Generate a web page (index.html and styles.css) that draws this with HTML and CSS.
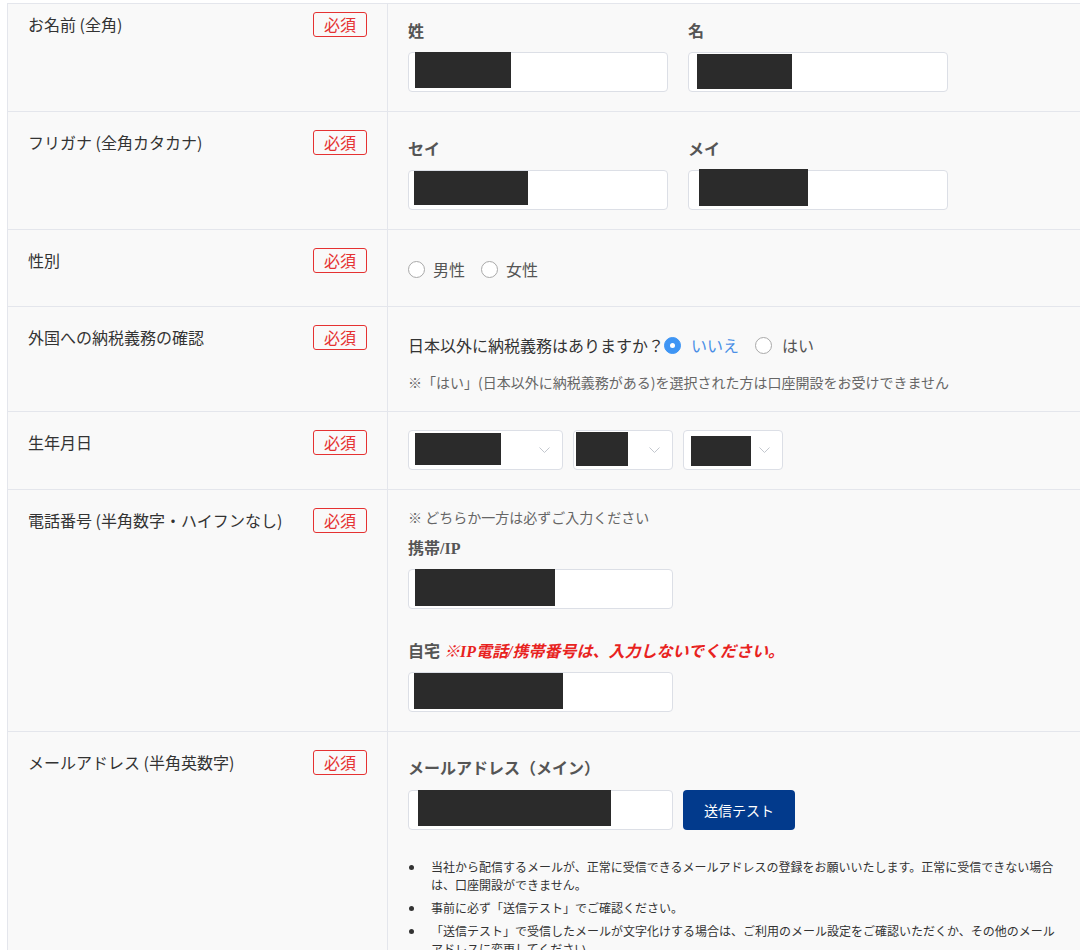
FILE: index.html
```html
<!DOCTYPE html>
<html lang="ja">
<head>
  <meta charset="UTF-8">
  <title>口座開設 お客様情報</title>
  <link rel="stylesheet" href="styles.css">
</head>
<body>
  <div class="form">
    <div class="row row-first">
      <div class="head"><span class="head-label">お名前 (全角)</span><span class="req">必須</span></div>
      <div class="body">
        <div class="pair">
          <div class="field">
            <div class="field-label">姓</div>
            <div class="input"><span class="mask mask-sei"></span></div>
          </div>
          <div class="field">
            <div class="field-label">名</div>
            <div class="input"><span class="mask mask-mei"></span></div>
          </div>
        </div>
      </div>
    </div>

    <div class="row">
      <div class="head"><span class="head-label">フリガナ (全角カタカナ)</span><span class="req">必須</span></div>
      <div class="body">
        <div class="pair">
          <div class="field">
            <div class="field-label">セイ</div>
            <div class="input"><span class="mask mask-kana-sei"></span></div>
          </div>
          <div class="field">
            <div class="field-label">メイ</div>
            <div class="input"><span class="mask mask-kana-mei"></span></div>
          </div>
        </div>
      </div>
    </div>

    <div class="row">
      <div class="head"><span class="head-label">性別</span><span class="req">必須</span></div>
      <div class="body">
        <div class="radio-group">
          <label class="radio"><span class="radio-mark"></span>男性</label>
          <label class="radio"><span class="radio-mark"></span>女性</label>
        </div>
      </div>
    </div>

    <div class="row">
      <div class="head"><span class="head-label">外国への納税義務の確認</span><span class="req">必須</span></div>
      <div class="body">
        <div class="question">
          <span>日本以外に納税義務はありますか？</span>
          <label class="radio radio-on"><span class="radio-mark checked"></span>いいえ</label>
          <label class="radio"><span class="radio-mark"></span>はい</label>
        </div>
        <p class="note">※「はい」(日本以外に納税義務がある)を選択された方は口座開設をお受けできません</p>
      </div>
    </div>

    <div class="row">
      <div class="head"><span class="head-label">生年月日</span><span class="req">必須</span></div>
      <div class="body">
        <div class="selects">
          <div class="select select-year">
            <span class="mask mask-year"></span>
            <svg class="chevron" width="11" height="6" viewBox="0 0 11 6"><polyline points="0.5,0.5 5.5,5.5 10.5,0.5" fill="none" stroke="#c3c7ce" stroke-width="1"/></svg>
          </div>
          <div class="select select-small">
            <span class="mask mask-month"></span>
            <svg class="chevron" width="11" height="6" viewBox="0 0 11 6"><polyline points="0.5,0.5 5.5,5.5 10.5,0.5" fill="none" stroke="#c3c7ce" stroke-width="1"/></svg>
          </div>
          <div class="select select-small">
            <span class="mask mask-day"></span>
            <svg class="chevron" width="11" height="6" viewBox="0 0 11 6"><polyline points="0.5,0.5 5.5,5.5 10.5,0.5" fill="none" stroke="#c3c7ce" stroke-width="1"/></svg>
          </div>
        </div>
      </div>
    </div>

    <div class="row">
      <div class="head"><span class="head-label">電話番号 (半角数字・ハイフンなし)</span><span class="req">必須</span></div>
      <div class="body">
        <p class="hint">※ どちらか一方は必ずご入力ください</p>
        <div class="field-label label-mobile">携帯/IP</div>
        <div class="input input-wide"><span class="mask mask-mobile"></span></div>
        <div class="field-label label-home">自宅 <em class="warn">※IP電話/携帯番号は、入力しないでください。</em></div>
        <div class="input input-wide"><span class="mask mask-home"></span></div>
      </div>
    </div>

    <div class="row">
      <div class="head"><span class="head-label">メールアドレス (半角英数字)</span><span class="req">必須</span></div>
      <div class="body">
        <div class="field-label label-mail">メールアドレス（メイン）</div>
        <div class="mail-line">
          <div class="input input-wide"><span class="mask mask-mail"></span></div>
          <button class="btn" type="button">送信テスト</button>
        </div>
        <ul class="notes">
          <li>当社から配信するメールが、正常に受信できるメールアドレスの登録をお願いいたします。正常に受信できない場合は、口座開設ができません。</li>
          <li>事前に必ず「送信テスト」でご確認ください。</li>
          <li>「送信テスト」で受信したメールが文字化けする場合は、ご利用のメール設定をご確認いただくか、その他のメールアドレスに変更してください。</li>
        </ul>
      </div>
    </div>
  </div>
</body>
</html>
```

FILE: styles.css
```css
html,body{
  margin: 0;
  padding: 0;
}
body{
  background: #fff;
  color: #333;
  font-family: "Noto Sans CJK JP", sans-serif;
  overflow: hidden;
}
.form{
  margin: 3px 0 0 7px;
  border-top: 1px solid #e4e6ec;
  border-left: 1px solid #e4e6ec;
  background: #f9f9f9;
}
.row{
  display: flex;
  border-bottom: 1px solid #e4e6ec;
}
.head{
  flex: none;
  width: 380px;
  box-sizing: border-box;
  padding: 18px 20px;
  border-right: 1px solid #e4e6ec;
  display: flex;
  justify-content: space-between;
  align-items: flex-start;
}
.head-label{
  font-size: 16px;
  line-height: 25px;
  color: #333;
}
.req{
  flex: none;
  border: 1px solid #e53232;
  border-radius: 3px;
  padding: 0 10px;
  font-size: 16px;
  line-height: 23px;
  color: #e53232;
}
.body{
  flex: 1;
  padding: 18px 20px 19px;
}
.row-first .head{
  padding-top: 8px;
}
.row-first .field-label{
  margin-top: -2px;
}

/* text fields */
.pair{
  display: flex;
  gap: 20px;
}
.field{
  width: 260px;
}
.field-label{
  margin: 8px 0;
  font-family: "Liberation Serif", "Noto Sans CJK JP", serif;
  font-weight: bold;
  font-size: 16px;
  line-height: 24px;
  color: #555;
}
.input{
  height: 40px;
  box-sizing: border-box;
  border: 1px solid #dcdfe6;
  border-radius: 4px;
  background: #fff;
  display: flex;
  align-items: flex-start;
}
.input-wide{
  width: 265px;
}
.mask{
  display: block;
  background: #2b2b2b;
}
.mask-sei{ width: 96px; height: 36px; margin: -1px 0 0 6px; }
.mask-mei{ width: 95px; height: 35px; margin: 1px 0 0 8px; }
.mask-kana-sei{ width: 114px; height: 34px; margin: 0 0 0 5px; }
.mask-kana-mei{ width: 109px; height: 37px; margin: -2px 0 0 10px; }
.mask-mobile{ width: 140px; height: 37px; margin: -1px 0 0 6px; }
.mask-home{ width: 149px; height: 36px; margin: 0 0 0 5px; }
.mask-mail{ width: 193px; height: 36px; margin: -1px 0 0 9px; }

/* radios */
.radio-group{
  height: 39px;
  box-sizing: border-box;
  padding-top: 3px;
  display: flex;
  align-items: center;
}
.radio{
  display: inline-flex;
  align-items: center;
  margin-right: 16px;
  font-size: 16px;
  color: #555;
}
.radio-mark{
  width: 17px;
  height: 17px;
  box-sizing: border-box;
  border: 1px solid #a9a9a9;
  border-radius: 50%;
  background: #fff;
  margin-right: 8px;
  display: flex;
  align-items: center;
  justify-content: center;
}
.radio-mark.checked{
  background: #3e95f4;
  border-color: #3e95f4;
}
.radio-mark.checked::after{
  content: "";
  width: 5px;
  height: 5px;
  border-radius: 50%;
  background: #fff;
}
.radio-on{
  color: #4a8fe6;
}
.question{
  display: flex;
  align-items: center;
  margin-top: 8px;
  font-size: 16px;
  line-height: 24px;
  color: #333;
}
.question .radio-mark{
  margin-right: 10px;
}
.note{
  margin: 15px 0 0;
  font-size: 14px;
  line-height: 20px;
  color: #666;
}

/* birthday */
.selects{
  display: flex;
  gap: 10px;
}
.select{
  height: 40px;
  box-sizing: border-box;
  border: 1px solid #dcdfe6;
  border-radius: 4px;
  background: #fff;
  display: flex;
  align-items: center;
  justify-content: space-between;
  padding-right: 12px;
}
.select-year{ width: 155px; }
.select-small{ width: 100px; }
.mask-year{ width: 86px; height: 32px; margin: 2px 0 0 6px; align-self: flex-start; }
.mask-month{ width: 52px; height: 34px; margin: 1px 0 0 2px; align-self: flex-start; }
.mask-day{ width: 60px; height: 30px; margin: 5px 0 0 7px; align-self: flex-start; }
.chevron{
  display: block;
}

/* phone */
.hint{
  margin: 0;
  font-size: 14px;
  line-height: 18px;
  color: #666;
}
.label-mobile{
  margin-top: 11px;
}
.label-home{
  margin-top: 31px;
}
.warn{
  font-style: italic;
  color: #e8231f;
}

/* mail */
.label-mail{
  margin: 7px 0 9px;
}
.mail-line{
  display: flex;
  gap: 10px;
}
.btn{
  width: 112px;
  height: 40px;
  border: 0;
  border-radius: 4px;
  background: #023a8c;
  color: #fff;
  font-family: "Noto Sans CJK JP", sans-serif;
  font-size: 14px;
}
.notes{
  list-style: none;
  margin: 28px 0 0;
  padding: 0;
  font-size: 12px;
  line-height: 18px;
  color: #333;
}
.notes li{
  position: relative;
  padding-left: 23px;
  margin-bottom: 5px;
}
.notes li::before{
  content: "";
  position: absolute;
  left: 1px;
  top: 7px;
  width: 5px;
  height: 5px;
  border-radius: 50%;
  background: #333;
}
```
